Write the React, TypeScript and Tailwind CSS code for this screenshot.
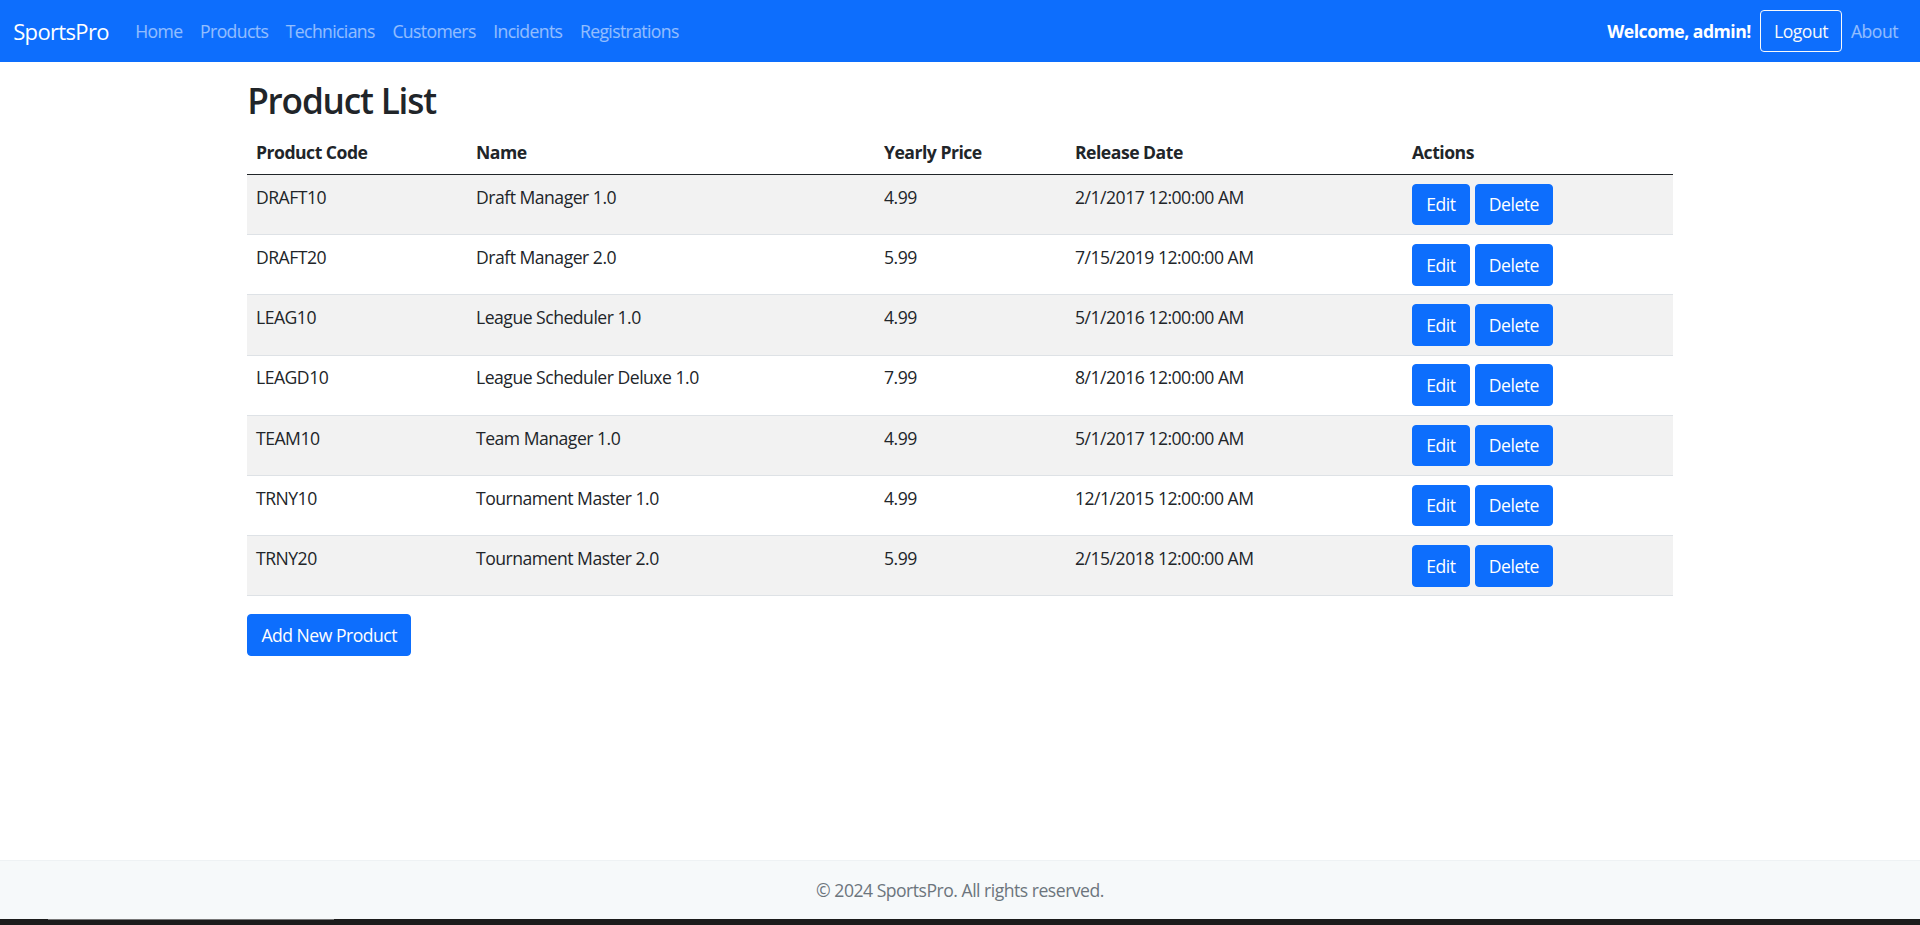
import React from "react";

const products = [
    {code: "DRAFT10", name: "Draft Manager 1.0", price: "4.99", date: "2/1/2017 12:00:00 AM"},
    {code: "DRAFT20", name: "Draft Manager 2.0", price: "5.99", date: "7/15/2019 12:00:00 AM"},
    {code: "LEAG10", name: "League Scheduler 1.0", price: "4.99", date: "5/1/2016 12:00:00 AM"},
    {code: "LEAGD10", name: "League Scheduler Deluxe 1.0", price: "7.99", date: "8/1/2016 12:00:00 AM"},
    {code: "TEAM10", name: "Team Manager 1.0", price: "4.99", date: "5/1/2017 12:00:00 AM"},
    {code: "TRNY10", name: "Tournament Master 1.0", price: "4.99", date: "12/1/2015 12:00:00 AM"},
    {code: "TRNY20", name: "Tournament Master 2.0", price: "5.99", date: "2/15/2018 12:00:00 AM"},
];

const navLinks = ["Home", "Products", "Technicians", "Customers", "Incidents", "Registrations"];

const btn =
    "inline-flex h-[41.6px] items-center rounded-[4px] border border-[#0d6efd] bg-[#0d6efd] px-[13.2px] text-[17.6px] leading-[1.5] text-white";

const App = () => {
    return (
        <div
            className="flex min-h-screen flex-col bg-white tracking-[-0.5px] text-[#212529]"
            style={{fontFamily: '"Open Sans", "Noto Sans", sans-serif'}}
        >
            {/* NAVBAR */}
            <nav className="flex h-[62px] items-center bg-[#0d6efd] px-[13.2px]">
                <a href="#" className="mr-[17.6px] text-[22px] leading-[1.5] tracking-[-0.65px] text-white">
                    SportsPro
                </a>
                <ul className="flex items-center">
                    {navLinks.map((l) => (
                        <li key={l}>
                            <a href="#" className="block px-[8.8px] py-[8.8px] text-[17.6px] leading-[1.5] tracking-[-0.62px] text-white/55">
                                {l}
                            </a>
                        </li>
                    ))}
                </ul>
                <div className="ml-auto flex items-center">
                    <span className="mr-[9px] text-[17.6px] font-bold text-white">Welcome, admin!</span>
                    <button className="h-[41.6px] rounded-[4px] border border-[#f8f9fa] px-[13.2px] text-[17.6px] leading-[1.5] text-[#f8f9fa]">
                        Logout
                    </button>
                    <a href="#" className="block px-[8.8px] py-[8.8px] text-[17.6px] leading-[1.5] text-white/55">
                        About
                    </a>
                </div>
            </nav>

            {/* CONTENT */}
            <main className="flex-1">
                <div className="mx-auto w-[1452px] px-[13.2px] pt-[17px]">
                    <h2 className="mb-[8.8px] text-[35.2px] font-semibold leading-[1.2] tracking-[-1.2px]">
                        Product List
                    </h2>

                    <table className="mb-[17.6px] w-full table-fixed border-collapse text-[17.6px] leading-[1.5]">
                        <colgroup>
                            <col className="w-[220px]"/>
                            <col className="w-[408px]"/>
                            <col className="w-[191px]"/>
                            <col className="w-[337px]"/>
                            <col/>
                        </colgroup>
                        <thead>
                        <tr className="border-b border-[#212529]">
                            <th className="p-[8.8px] text-left align-top font-bold">Product Code</th>
                            <th className="p-[8.8px] text-left align-top font-bold">Name</th>
                            <th className="p-[8.8px] text-left align-top font-bold">Yearly Price</th>
                            <th className="p-[8.8px] text-left align-top font-bold">Release Date</th>
                            <th className="p-[8.8px] text-left align-top font-bold">Actions</th>
                        </tr>
                        </thead>
                        <tbody>
                        {products.map((p, i) => (
                            <tr
                                key={p.code}
                                className={`border-b border-[#dee2e6] ${i % 2 === 0 ? "bg-[#f2f2f2]" : "bg-white"}`}
                            >
                                <td className="p-[8.8px] align-top">{p.code}</td>
                                <td className="p-[8.8px] align-top">{p.name}</td>
                                <td className="p-[8.8px] align-top">{p.price}</td>
                                <td className="p-[8.8px] align-top">{p.date}</td>
                                <td className="p-[8.8px] align-top">
                                    <div className="flex gap-[5px]">
                                        <button className={btn}>Edit</button>
                                        <button className={btn}>Delete</button>
                                    </div>
                                </td>
                            </tr>
                        ))}
                        </tbody>
                    </table>

                    <button className={btn}>Add New Product</button>
                </div>
            </main>

            {/* FOOTER */}
            <footer className="flex h-[59px] items-center justify-center border-t border-[#eef2f4] bg-[#f6f9fa] text-[17.6px] text-[#6c757d]">
                © 2024 SportsPro. All rights reserved.
            </footer>
            <div className="h-[6px] bg-[#1b1b1b]">
                <div className="ml-[48px] h-[1px] w-[286px] bg-[#777]"/>
            </div>
        </div>
    );
};

export default App;
